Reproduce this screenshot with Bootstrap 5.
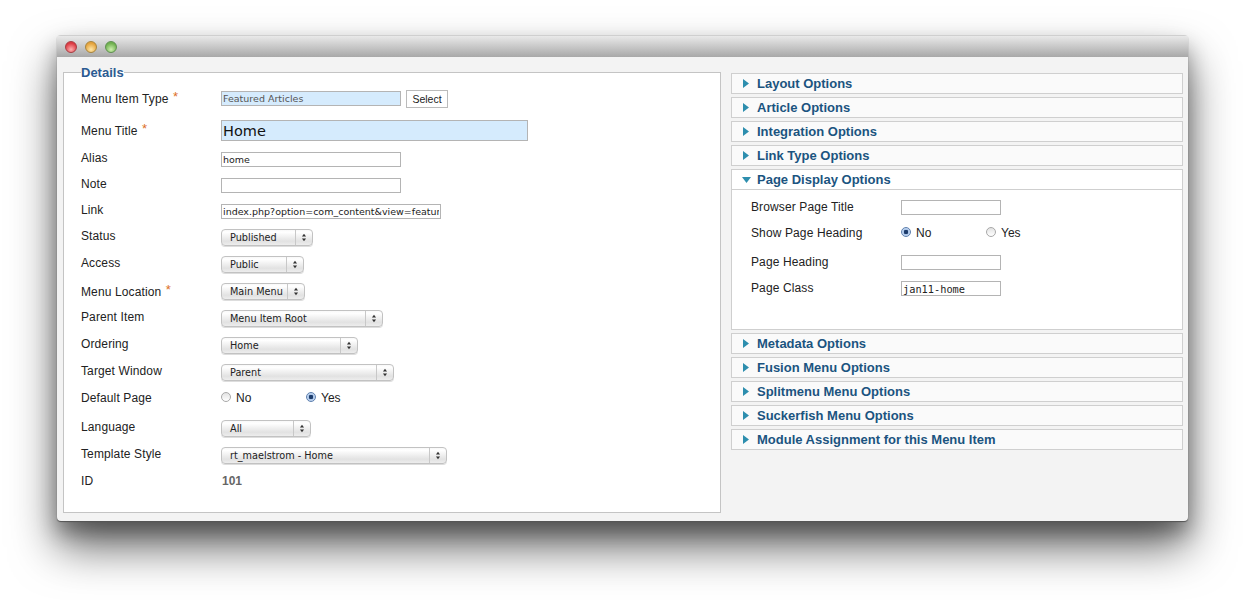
<!DOCTYPE html>
<html lang="en">
<head>
  <meta charset="UTF-8" />
  <meta name="viewport" content="width=device-width, initial-scale=1.0" />
  <title>Edit Menu Item</title>
  <link href="https://cdn.jsdelivr.net/npm/bootstrap@5.3.0/dist/css/bootstrap.min.css" rel="stylesheet" />
  <style>
    body { min-height: 600px; padding: 35px 0 0 57px; background: #fff; font-family: "Liberation Sans", Arial, sans-serif; font-size: 12px; color: #222; }
    .mac-window { width: 1131px; height: 486px; background: #f3f3f3; border-radius: 4px; box-shadow: 0 1px 1px #555, 0 12px 20px rgba(0,0,0,.3), 0 26px 46px rgba(0,0,0,.6); overflow: hidden; }
    .mac-bar { height: 22px; padding-left: 8px; gap: 8px; background: linear-gradient(#e9e9e9, #a8a8a8); border-top: 1px solid #cfcfcf; }
    .dot { width: 12px; height: 12px; border-radius: 50%; }
    .dot-red { background: radial-gradient(circle at 50% 75%, #ffb0b0, #dc3a42 70%); border: 1px solid #a83c42; }
    .dot-yellow { background: radial-gradient(circle at 50% 75%, #ffe8a8, #e4a23c 70%); border: 1px solid #a8853c; }
    .dot-green { background: radial-gradient(circle at 50% 75%, #cdf0ae, #6fb04e 70%); border: 1px solid #5f9050; }
    .mac-body { padding: 8px 5px 0 6px; gap: 10px; }

    .details-box { width: 658px; height: 448px; margin: 0; padding: 0 17px; background: #fff; border: 1px solid #c4c4c4; min-width: 0; }
    .details-box legend { float: none; width: auto; margin: 0; padding: 1px 0 0; font-size: 13px; line-height: 14px; font-weight: 700; color: #2b5b92; }
    .details-grid { display: grid; grid-template-columns: 140px 1fr; grid-template-rows: 30px 29px 26px 26px 26px 27px 29px 25px 27px 27px 27px 29px 27px 27px auto; align-items: start; margin-top: 10px; }
    .field-label { line-height: 15px; margin: 2px 0 0; letter-spacing: .12px; }
    .field-label.down { margin-top: 3px; }
    .field-label.up { margin-top: 1px; }
    .req { color: #dc6f26; font-size: 13px; margin-left: 1px; position: relative; top: -2px; }
    .off-1 { margin-top: 1px; }
    .off-2 { margin-top: 2px; }
    .off-3 { margin-top: 3px; }

    .txt { display: block; height: 15px; padding: 0 1px; border: 1px solid #b4b4b4; background: #fff; font-family: "DejaVu Sans", sans-serif; font-size: 9.5px; line-height: normal; color: #222; border-radius: 0; outline: 0; }
    .txt-180 { width: 180px; }
    .txt-100 { width: 100px; }
    .txt-220 { width: 220px; }
    .txt-big { width: 307px; height: 21px; font-size: 14.5px; background: #d5ebfd; color: #111; }
    .txt-ro { background: #d5ebfd; color: #555; }
    .btn-pick { height: 18px; width: 42px; padding: 0; margin-left: 5px; background: #fff; border: 1px solid #bbb; border-radius: 0; font-family: "Liberation Sans", sans-serif; font-size: 10.5px; line-height: 16px; color: #222; }

    .mac-select { height: 17px; border: 1px solid #c2c2c2; border-radius: 4px; background: linear-gradient(#f8f8f8, #fff 15%, #e2e2e2 75%, #ededed); font-family: "DejaVu Sans", sans-serif; font-size: 9.7px; line-height: 15px; color: #222; box-shadow: 0 1px 0 #ddd; }
    .mac-select span { flex: 1; padding-left: 8px; white-space: nowrap; overflow: hidden; }
    .mac-select svg { flex: none; width: 17px; height: 15px; border-left: 1px solid #c8c8c8; }
    .sel-92 { width: 92px; }
    .sel-83 { width: 83px; }
    .sel-84 { width: 84px; }
    .sel-162 { width: 162px; }
    .sel-137 { width: 137px; }
    .sel-173 { width: 173px; }
    .sel-90 { width: 90px; }
    .sel-226 { width: 226px; }

    .radio-set { height: 15px; margin-top: 2px; }
    .radio-set label { display: flex; align-items: center; line-height: 15px; }
    .radio-wide label:first-child { width: 85px; }
    .radio-set input { appearance: none; width: 10px; height: 10px; margin: 0 5px 0 0; border-radius: 50%; border: 1px solid #a8a8a8; background: linear-gradient(#e2e2e2, #fff); position: relative; top: -2px; }
    .radio-set input:checked { border-color: #5d7fae; background: radial-gradient(circle, #1d3c6b 0 2px, #a9c4e8 2.5px, #d8e6f8 5px); }
    .id-val { font-weight: 700; color: #666; line-height: 15px; padding-left: 1px; margin-top: 2px; }

    .panel-stack { width: 452px; padding-top: 8px; gap: 3px; }
    .slide { border: 1px solid #cfcfcf; background: #fafafa; }
    .slide-head { height: 19px; padding-left: 11px; gap: 8px; font-size: 13px; line-height: 19px; font-weight: 700; color: #1b5480; }
    .slide-open .slide-head { height: 20px; border-bottom: 1px solid #cfcfcf; }
    .slide-open { background: #fff; }
    .tri { flex: none; width: 6px; height: 9px; }
    .tri-open { width: 9px; height: 6px; margin-left: -1px; margin-right: -2px; }
    .page-grid { display: grid; grid-template-columns: 150px 1fr; grid-template-rows: 26px 29px 26px 15px; align-items: start; padding: 9px 0 34px 19px; }
    .page-grid .txt { margin-top: 1px; }
    .page-grid .field-label { margin-top: 1px; }
    .page-grid .radio-set { margin-top: 1px; }
    .mono { font-family: "DejaVu Sans Mono", monospace; font-size: 10.3px; }
  </style>
</head>
<body>
  <div class="mac-window">
    <div class="mac-bar d-flex align-items-center">
      <div class="dot dot-red"></div>
      <div class="dot dot-yellow"></div>
      <div class="dot dot-green"></div>
    </div>
    <div class="mac-body d-flex">
      <fieldset class="details-box">
        <legend>Details</legend>
        <div class="details-grid">
          <label class="field-label up">Menu Item Type <span class="req">*</span></label>
          <div class="d-flex align-items-start">
            <input class="txt txt-180 txt-ro off-1" type="text" value="Featured Articles" readonly />
            <button class="btn-pick" type="button">Select</button>
          </div>

          <label class="field-label down">Menu Title <span class="req">*</span></label>
          <input class="txt txt-big" type="text" value="Home" />

          <label class="field-label">Alias</label>
          <input class="txt txt-180 off-3" type="text" value="home" />

          <label class="field-label">Note</label>
          <input class="txt txt-180 off-3" type="text" />

          <label class="field-label">Link</label>
          <input class="txt txt-220 off-3" type="text" value="index.php?option=com_content&amp;view=featured" />

          <label class="field-label">Status</label>
          <div class="mac-select sel-92 d-flex off-2"><span>Published</span><svg viewBox="0 0 17 15"><path d="M8.5 3.5l2.2 3h-4.400zM8.500 11.500l2.200-3h-4.400z" fill="#333"/></svg></div>

          <label class="field-label">Access</label>
          <div class="mac-select sel-83 d-flex off-2"><span>Public</span><svg viewBox="0 0 17 15"><path d="M8.5 3.5l2.2 3h-4.400zM8.500 11.500l2.200-3h-4.400z" fill="#333"/></svg></div>

          <label class="field-label up">Menu Location <span class="req">*</span></label>
          <div class="mac-select sel-84 d-flex"><span>Main Menu</span><svg viewBox="0 0 17 15"><path d="M8.5 3.5l2.2 3h-4.400zM8.500 11.500l2.200-3h-4.400z" fill="#333"/></svg></div>

          <label class="field-label">Parent Item</label>
          <div class="mac-select sel-162 d-flex off-2"><span>Menu Item Root</span><svg viewBox="0 0 17 15"><path d="M8.5 3.5l2.2 3h-4.400zM8.500 11.500l2.200-3h-4.400z" fill="#333"/></svg></div>

          <label class="field-label">Ordering</label>
          <div class="mac-select sel-137 d-flex off-2"><span>Home</span><svg viewBox="0 0 17 15"><path d="M8.5 3.5l2.2 3h-4.400zM8.500 11.500l2.200-3h-4.400z" fill="#333"/></svg></div>

          <label class="field-label">Target Window</label>
          <div class="mac-select sel-173 d-flex off-2"><span>Parent</span><svg viewBox="0 0 17 15"><path d="M8.5 3.5l2.2 3h-4.400zM8.500 11.500l2.200-3h-4.400z" fill="#333"/></svg></div>

          <label class="field-label">Default Page</label>
          <div class="radio-set radio-wide d-flex">
            <label><input type="radio" name="home" />No</label>
            <label><input type="radio" name="home" checked />Yes</label>
          </div>

          <label class="field-label">Language</label>
          <div class="mac-select sel-90 d-flex off-2"><span>All</span><svg viewBox="0 0 17 15"><path d="M8.5 3.5l2.2 3h-4.400zM8.500 11.500l2.200-3h-4.400z" fill="#333"/></svg></div>

          <label class="field-label">Template Style</label>
          <div class="mac-select sel-226 d-flex off-2"><span>rt_maelstrom - Home</span><svg viewBox="0 0 17 15"><path d="M8.5 3.5l2.2 3h-4.400zM8.500 11.500l2.200-3h-4.400z" fill="#333"/></svg></div>

          <label class="field-label">ID</label>
          <div class="id-val">101</div>
        </div>
      </fieldset>

      <div class="panel-stack d-flex flex-column">
        <div class="slide"><div class="slide-head d-flex align-items-center"><svg class="tri" viewBox="0 0 6 9"><path d="M0 0l6 4.500-6 4.500z" fill="#2d8eae"/></svg>Layout Options</div></div>
        <div class="slide"><div class="slide-head d-flex align-items-center"><svg class="tri" viewBox="0 0 6 9"><path d="M0 0l6 4.500-6 4.500z" fill="#2d8eae"/></svg>Article Options</div></div>
        <div class="slide"><div class="slide-head d-flex align-items-center"><svg class="tri" viewBox="0 0 6 9"><path d="M0 0l6 4.500-6 4.500z" fill="#2d8eae"/></svg>Integration Options</div></div>
        <div class="slide"><div class="slide-head d-flex align-items-center"><svg class="tri" viewBox="0 0 6 9"><path d="M0 0l6 4.500-6 4.500z" fill="#2d8eae"/></svg>Link Type Options</div></div>
        <div class="slide slide-open">
          <div class="slide-head d-flex align-items-center"><svg class="tri tri-open" viewBox="0 0 9 6"><path d="M0 0h9l-4.500 6z" fill="#2d8eae"/></svg>Page Display Options</div>
          <div class="page-grid">
            <label class="field-label">Browser Page Title</label>
            <input class="txt txt-100" type="text" />
            <label class="field-label">Show Page Heading</label>
            <div class="radio-set radio-wide d-flex">
              <label><input type="radio" name="heading" checked />No</label>
              <label><input type="radio" name="heading" />Yes</label>
            </div>
            <label class="field-label">Page Heading</label>
            <input class="txt txt-100" type="text" />
            <label class="field-label">Page Class</label>
            <input class="txt txt-100 mono" type="text" value="jan11-home" />
          </div>
        </div>
        <div class="slide"><div class="slide-head d-flex align-items-center"><svg class="tri" viewBox="0 0 6 9"><path d="M0 0l6 4.500-6 4.500z" fill="#2d8eae"/></svg>Metadata Options</div></div>
        <div class="slide"><div class="slide-head d-flex align-items-center"><svg class="tri" viewBox="0 0 6 9"><path d="M0 0l6 4.500-6 4.500z" fill="#2d8eae"/></svg>Fusion Menu Options</div></div>
        <div class="slide"><div class="slide-head d-flex align-items-center"><svg class="tri" viewBox="0 0 6 9"><path d="M0 0l6 4.500-6 4.500z" fill="#2d8eae"/></svg>Splitmenu Menu Options</div></div>
        <div class="slide"><div class="slide-head d-flex align-items-center"><svg class="tri" viewBox="0 0 6 9"><path d="M0 0l6 4.500-6 4.500z" fill="#2d8eae"/></svg>Suckerfish Menu Options</div></div>
        <div class="slide"><div class="slide-head d-flex align-items-center"><svg class="tri" viewBox="0 0 6 9"><path d="M0 0l6 4.500-6 4.500z" fill="#2d8eae"/></svg>Module Assignment for this Menu Item</div></div>
      </div>
    </div>
  </div>
  <script src="https://cdn.jsdelivr.net/npm/bootstrap@5.3.0/dist/js/bootstrap.bundle.min.js"></script>
</body>
</html>
